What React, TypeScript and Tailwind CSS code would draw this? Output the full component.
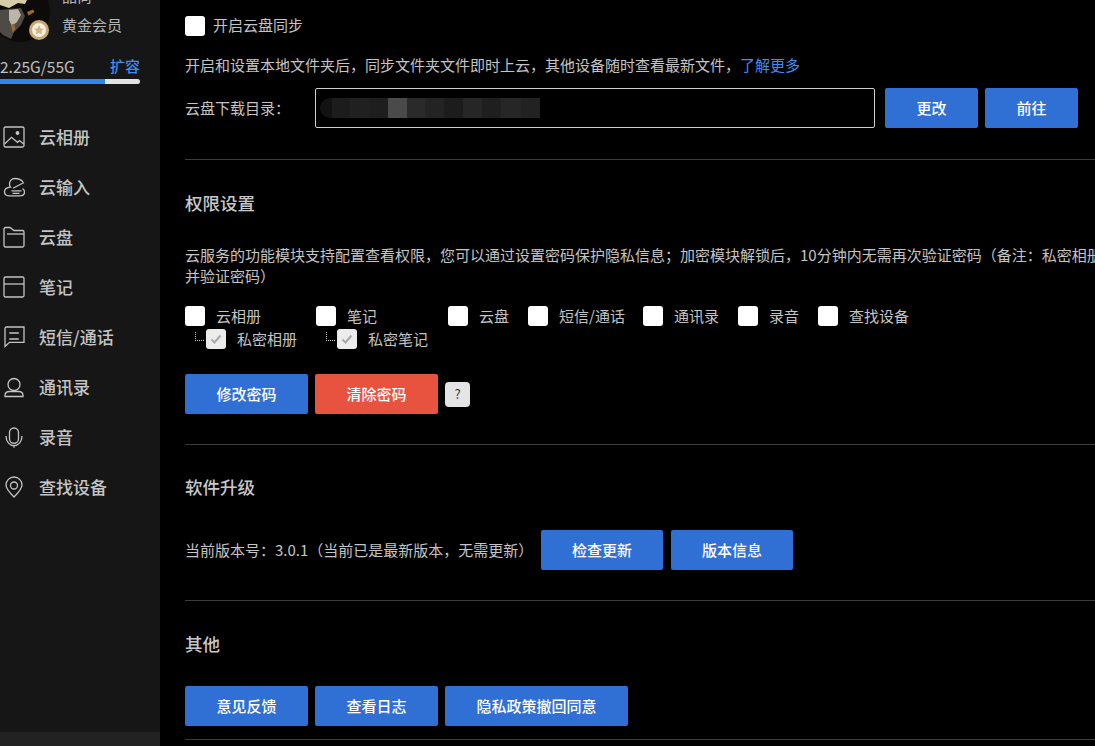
import type { ReactNode } from 'react';

const fontStack = '"Noto Sans CJK SC", "Noto Sans", sans-serif';

function NavIcon({ name }: { name: string }) {
  const paths: Record<string, ReactNode> = {
    album: (
      <>
        <rect x="1" y="1" width="20" height="20" rx="1.500" />
        <path d="M1.500 18l7-6.700 6 5 2-1.700 4.500 3.700" />
        <circle cx="14.500" cy="7" r="1.300" fill="currentColor" />
      </>
    ),
    input: (
      <>
        <path d="M20 6C18 3.500 15 2.500 12 2.500 8.500 2.500 6.500 5 6.500 8c0 1.200.4 2.400 1 3.200C4 11.500 1.500 13 1.500 15.800c0 2.600 2 4 4.500 4h11c2.800 0 4.500-1.800 4.500-3.800 0-1.500-.8-2.800-2-3.500" />
        <path d="M10 12.300L21 6.500M8.500 14.800h10M9.500 17.300h7" />
      </>
    ),
    disk: (
      <>
        <path d="M1 19.500V3A1.500 1.500 0 0 1 2.500 1.500H7l4 3h8.500A1.500 1.500 0 0 1 21 6v13.500A1.500 1.500 0 0 1 19.500 21h-17A1.500 1.500 0 0 1 1 19.500z" />
        <path d="M4 8h17" />
      </>
    ),
    note: (
      <>
        <rect x="1" y="1" width="20" height="20" rx="1.500" />
        <path d="M1 8h20" />
      </>
    ),
    sms: <path d="M2 20.500V2.500A1.500 1.500 0 0 1 3.500 1H21v15.300H6.500zM6.300 7h9.500M6.300 13h9.500" />,
    contact: (
      <>
        <circle cx="11" cy="8.500" r="6" />
        <path d="M2 20.500v-1c0-2.500 2-4 4.500-4h9c2.500 0 4.500 1.500 4.500 4v1z" />
      </>
    ),
    mic: (
      <>
        <rect x="6.500" y="2" width="9" height="15.300" rx="4.500" />
        <path d="M3 10c0 6 4 9.700 8 9.700s8-3.700 8-9.700M11 19.700v2" />
      </>
    ),
    find: (
      <>
        <path d="M11 21C6 16 3 12.500 3 9a8 8 0 0 1 16 0c0 3.500-3 7-8 12z" />
        <circle cx="11" cy="9.500" r="3.500" />
      </>
    ),
  };
  return (
    <svg
      viewBox="0 0 22 22"
      className="w-[22px] h-[22px] shrink-0 text-[#c4c4c4]"
      fill="none"
      stroke="currentColor"
      strokeWidth="1.300"
    >
      {paths[name]}
    </svg>
  );
}

const navItems = [
  { icon: 'album', label: '云相册' },
  { icon: 'input', label: '云输入' },
  { icon: 'disk', label: '云盘' },
  { icon: 'note', label: '笔记' },
  { icon: 'sms', label: '短信/通话' },
  { icon: 'contact', label: '通讯录' },
  { icon: 'mic', label: '录音' },
  { icon: 'find', label: '查找设备' },
];

// blurred-out folder path in the download input
const mosaicBlocks = [
  'w-[12px] bg-[#121212] rounded-l-full',
  'w-[18px] bg-[#1c1c1c]',
  'w-[19px] bg-[#202020]',
  'w-[19px] bg-[#1e1e1e]',
  'w-[19px] bg-[#4a4a4a]',
  'w-[18px] bg-[#2a2a2a]',
  'w-[19px] bg-[#232323]',
  'w-[19px] bg-[#1c1c1c]',
  'w-[19px] bg-[#262626]',
  'w-[19px] bg-[#1f1f1f]',
  'w-[20px] bg-[#262626]',
  'w-[19px] bg-[#222222]',
];

function Avatar() {
  return (
    <svg viewBox="0 0 50 42" className="w-[50px] h-[42px] shrink-0">
      <circle cx="20" cy="12" r="30" fill="#0d0b0a" />
      <path d="M0 0h27l-2 4-7-1-9 5-9-3z" fill="#d8cba8" />
      <path d="M0 10l9-1 12-1 4 8-4 9-7 7-3 7-8-4-3-3z" fill="#4e4a46" />
      <path d="M9 10l9-1 3 6-4 7-5 4-3-6z" fill="#bdb6a8" />
      <path d="M27 12l6-2.500 1.500 2.500-6 3.500z" fill="#a5682a" />
      <path d="M11 25l3-1.500 1.500 6-3 3z" fill="#9a6a2e" />
      <circle cx="39" cy="30" r="10" fill="#c8a970" />
      <circle cx="39" cy="30" r="7" fill="#f4efe4" />
      <path d="M39 25l1.500 3.300 3.500.4-2.600 2.300.8 3.500-3.200-1.800-3.200 1.800.8-3.500-2.600-2.300 3.500-.4z" fill="#d4b680" />
    </svg>
  );
}

function Sidebar() {
  return (
    <aside className="w-40 shrink-0 h-full bg-[#161616] flex flex-col overflow-hidden">
      <div className="flex h-[42px] text-[15px] text-[#b5b5b5]">
        <Avatar />
        <div className="pl-3 flex flex-col">
          <span className="leading-5 -mt-[14px]">品尚</span>
          <span className="leading-5 mt-[10px] -translate-y-px">黄金会员</span>
        </div>
      </div>
      <div className="flex justify-between items-center w-[140px] mt-[14px] h-5 text-[15.500px] leading-5">
        <span className="text-[#c0c0c0]">2.25G/55G</span>
        <span className="text-[15px] text-[#3d8ef0] font-medium">扩容</span>
      </div>
      <div className="w-[140px] h-[5px] mt-[3px] bg-[#e2e2e2] rounded-r-sm overflow-hidden">
        <div className="w-[105px] h-full bg-[#2f86ea]" />
      </div>
      <nav className="flex flex-col mt-[28px]">
        {navItems.map((item) => (
          <div key={item.label} className="h-[50px] flex items-center gap-[14px] pl-[3px]">
            <NavIcon name={item.icon} />
            <span className="text-[17px] font-medium text-[#c4c4c4]">{item.label}</span>
          </div>
        ))}
      </nav>
      <div className="mt-auto h-[14px] bg-[#222222]" />
    </aside>
  );
}

function Btn({ children, w, red }: { children: ReactNode; w: string; red?: boolean }) {
  return (
    <button
      className={`${w} ${red ? 'bg-[#e85340]' : 'bg-[#3070d5]'} h-10 shrink-0 rounded-[2px] text-white text-[15px] font-medium`}
    >
      {children}
    </button>
  );
}

function Check({ label, w }: { label: string; w: string }) {
  return (
    <label className={`${w} flex items-center h-5 shrink-0`}>
      <span className="w-5 h-5 rounded-[3px] bg-white shrink-0" />
      <span className="ml-[11px] text-[15px] text-[#c4c4c4] whitespace-nowrap">{label}</span>
    </label>
  );
}

function SubCheck({ label, w }: { label: string; w: string }) {
  return (
    <div className={`${w} flex items-center h-5 shrink-0 pl-[10px]`}>
      <span className="w-[9px] h-[9px] -mt-[6px] border-l border-b border-dotted border-[#cccccc]" />
      <span className="ml-[2px] w-5 h-5 rounded-[3px] bg-[#ececec] shrink-0 flex items-center justify-center">
        <svg viewBox="0 0 14 14" className="w-[14px] h-[14px]" fill="none" stroke="#a8a8a8" strokeWidth="2">
          <path d="M2.500 7.500l3 3 6-7" />
        </svg>
      </span>
      <span className="ml-[11px] text-[15px] text-[#c4c4c4] whitespace-nowrap">{label}</span>
    </div>
  );
}

function Divider() {
  return <div className="h-px bg-[#3a3a3a] shrink-0" />;
}

function Heading({ children }: { children: ReactNode }) {
  return <h2 className="text-[17.500px] leading-6 font-medium text-[#c8c8c8]">{children}</h2>;
}

export default function App() {
  return (
    <div
      className="flex w-[1095px] h-[746px] overflow-hidden bg-black"
      style={{ fontFamily: fontStack }}
    >
      <Sidebar />
      <main className="flex-1 min-w-0 pl-[25px] overflow-hidden text-[15px] text-[#c4c4c4]">
        <div className="flex items-center h-5 mt-4">
          <span className="w-5 h-5 rounded-[3px] bg-white" />
          <span className="ml-2 -mt-[2px]">开启云盘同步</span>
        </div>
        <p className="mt-[19px] leading-5 whitespace-nowrap">
          开启和设置本地文件夹后，同步文件夹文件即时上云，其他设备随时查看最新文件，
          <span className="text-[#3d8ef0]">了解更多</span>
        </p>
        <div className="flex items-center mt-[13px]">
          <span className="w-[130px] shrink-0">云盘下载目录：</span>
          <div className="w-[560px] h-10 border border-[#d0d0d0] rounded-[2px] shrink-0 flex items-center pl-[4px]">
            <div className="flex h-[20px]">
              {mosaicBlocks.map((block, i) => (
                <div key={i} className={block} />
              ))}
            </div>
          </div>
          <div className="flex gap-[7px] ml-[10px]">
            <Btn w="w-[93px]">更改</Btn>
            <Btn w="w-[93px]">前往</Btn>
          </div>
        </div>
        <div className="mt-[31px]">
          <Divider />
        </div>
        <div className="mt-[31px]">
          <Heading>权限设置</Heading>
        </div>
        <p className="mt-[29px] leading-[21px] whitespace-nowrap">
          云服务的功能模块支持配置查看权限，您可以通过设置密码保护隐私信息；加密模块解锁后，10分钟内无需再次验证密码（备注：私密相册
          <br />
          并验证密码）
        </p>
        <div className="flex mt-[20px]">
          <Check label="云相册" w="w-[131px]" />
          <Check label="笔记" w="w-[132px]" />
          <Check label="云盘" w="w-[80px]" />
          <Check label="短信/通话" w="w-[115px]" />
          <Check label="通讯录" w="w-[95px]" />
          <Check label="录音" w="w-[80px]" />
          <Check label="查找设备" w="w-[120px]" />
        </div>
        <div className="flex mt-[3px]">
          <SubCheck label="私密相册" w="w-[131px]" />
          <SubCheck label="私密笔记" w="w-[132px]" />
        </div>
        <div className="flex items-center gap-[7px] mt-[25px]">
          <Btn w="w-[123px]">修改密码</Btn>
          <Btn w="w-[123px]" red>
            清除密码
          </Btn>
          <span className="w-[25px] h-[25px] rounded-[4px] bg-[#e4e4e4] text-[#333333] text-[13px] flex items-center justify-center">
            ?
          </span>
        </div>
        <div className="mt-[30px]">
          <Divider />
        </div>
        <div className="mt-[30px]">
          <Heading>软件升级</Heading>
        </div>
        <div className="flex items-center mt-[31px]">
          <span className="w-[356px] shrink-0 whitespace-nowrap">当前版本号：3.0.1（当前已是最新版本，无需更新）</span>
          <div className="flex gap-2">
            <Btn w="w-[122px]">检查更新</Btn>
            <Btn w="w-[122px]">版本信息</Btn>
          </div>
        </div>
        <div className="mt-[30px]">
          <Divider />
        </div>
        <div className="mt-[31px]">
          <Heading>其他</Heading>
        </div>
        <div className="flex gap-[7px] mt-[30px]">
          <Btn w="w-[123px]">意见反馈</Btn>
          <Btn w="w-[123px]">查看日志</Btn>
          <Btn w="w-[183px]">隐私政策撤回同意</Btn>
        </div>
        <div className="mt-[13px]">
          <Divider />
        </div>
      </main>
    </div>
  );
}
